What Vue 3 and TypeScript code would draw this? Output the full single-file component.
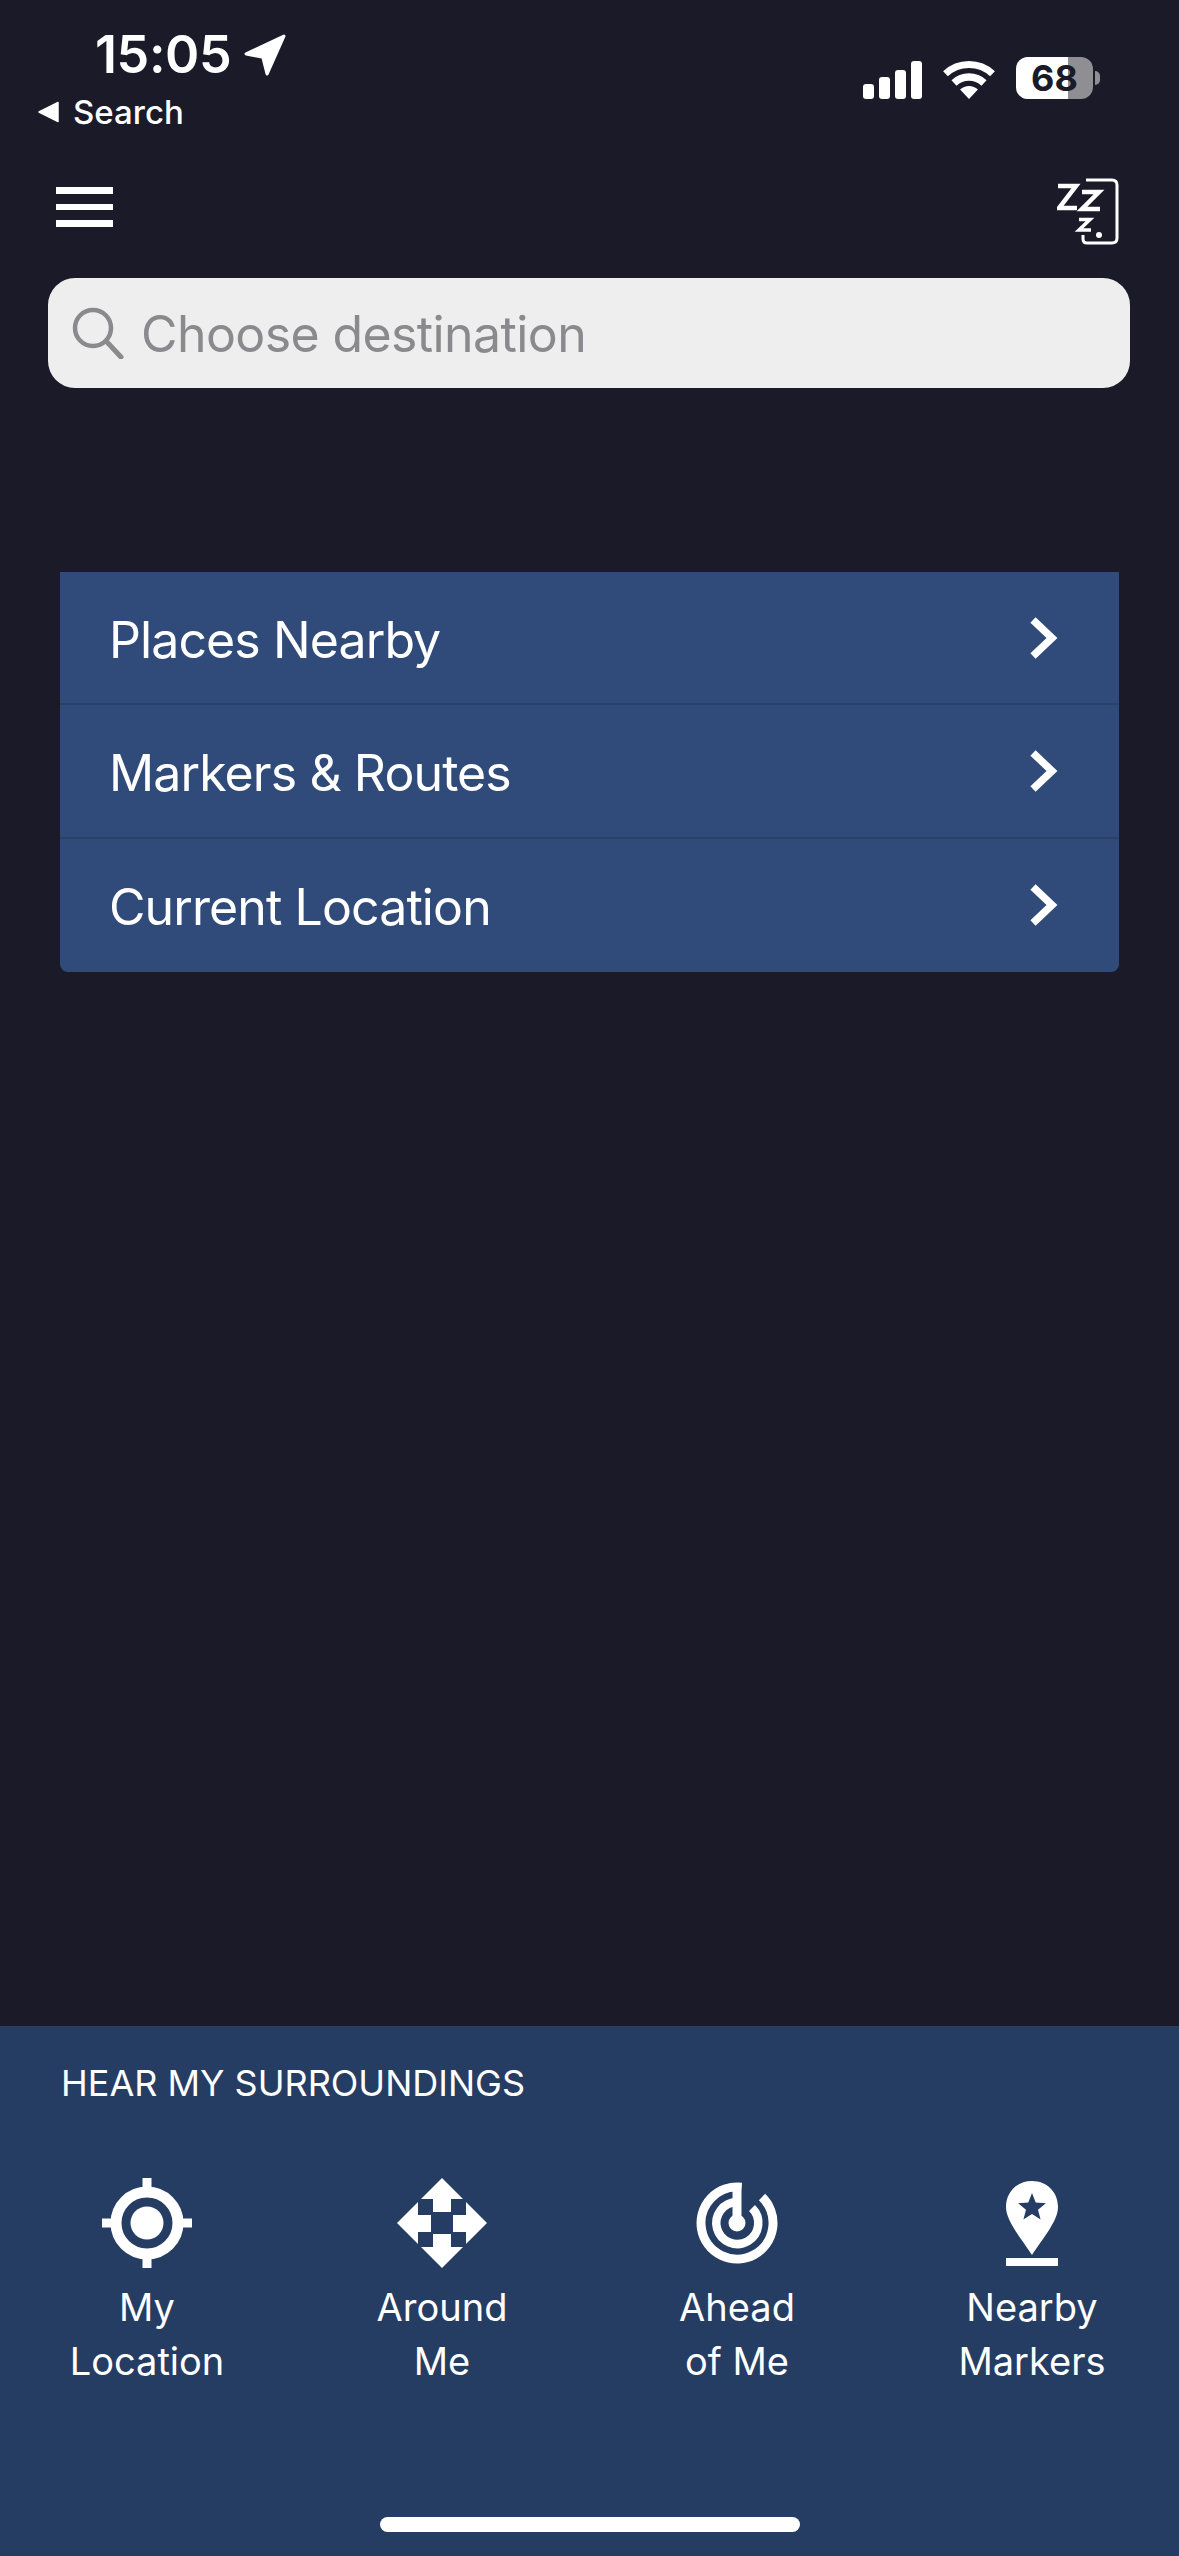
<template>
  <div class="screen">
    <div class="status-bar">
      <div class="status-left">
        <div class="time-row">
          <span class="time">15:05</span>
          <svg class="location-arrow" width="42" height="42" viewBox="0 0 40 40">
            <path d="M38 2 L2 19 L18 22 L22 38 Z" fill="#fff" stroke="#fff" stroke-width="3" stroke-linejoin="round" />
          </svg>
        </div>
        <div class="back-row">
          <svg width="22" height="22" viewBox="0 0 22 22">
            <path d="M1 11 L20 1.5 V20.5 Z" fill="#fff" stroke="#fff" stroke-width="1.5" stroke-linejoin="round" />
          </svg>
          <span class="back-label">Search</span>
        </div>
      </div>
      <div class="status-right">
        <div class="signal">
          <span v-for="h in signalBars" :key="h" class="signal-bar" :style="{ height: h + 'px' }"></span>
        </div>
        <svg width="52" height="38" viewBox="0 0 52 38">
          <path d="M2.5 12.8 A34.5 34.5 0 0 1 49.5 12.8" fill="none" stroke="#fff" stroke-width="7" />
          <path d="M11 22 A22 22 0 0 1 41 22" fill="none" stroke="#fff" stroke-width="7.5" />
          <path d="M26 38 L17.1 28.5 A13 13 0 0 1 34.9 28.5 Z" fill="#fff" />
        </svg>
        <div class="battery">
          <div class="battery-body">
            <div class="battery-fill"></div>
            <span class="battery-text">68</span>
          </div>
          <span class="battery-nub"></span>
        </div>
      </div>
    </div>

    <div class="nav">
      <div class="hamburger">
        <span></span>
        <span></span>
        <span></span>
      </div>
      <svg width="62" height="68" viewBox="0 0 62 68" fill="none" stroke="#fff">
        <path d="M29 3 H55 Q60 3 60 8 V61 Q60 66 55 66 H30 Q26 66 26 62 V58" stroke-width="3" />
        <path d="M1 9 H19 L2 31 H20" stroke-width="4.5" />
        <path d="M25 15 H42 L25 32 H43" stroke-width="4.5" />
        <path d="M22 42.5 H33 L22 53 H34" stroke-width="3.5" />
        <circle cx="42" cy="58" r="3" fill="#fff" stroke="none" />
      </svg>
    </div>

    <div class="search-box">
      <svg width="52" height="52" viewBox="0 0 52 52" fill="none" stroke="#8a8a8e" stroke-width="4.5">
        <circle cx="21" cy="21" r="18" />
        <path d="M34 34 L49 50" stroke-linecap="round" stroke-width="5" />
      </svg>
      <span class="search-placeholder">Choose destination</span>
    </div>

    <div class="menu-list">
      <div v-for="item in menuItems" :key="item" class="menu-row">
        <span class="menu-label">{{ item }}</span>
        <svg width="30" height="44" viewBox="0 0 30 44" fill="none" stroke="#fff" stroke-width="7.5">
          <path d="M4 4 L23 22 L4 40" />
        </svg>
      </div>
    </div>

    <div class="bottom-panel">
      <div class="panel-title">HEAR MY SURROUNDINGS</div>
      <div class="actions">
        <div class="action">
          <svg class="action-icon" width="90" height="90" viewBox="0 0 90 90">
            <circle cx="45" cy="45" r="31" fill="none" stroke="#fff" stroke-width="11" />
            <circle cx="45" cy="45" r="16.5" fill="#fff" />
            <path d="M40.5 0 H49.5 V12 H40.5 Z M40.5 78 H49.5 V90 H40.5 Z M0 40.5 H12 V49.5 H0 Z M78 40.5 H90 V49.5 H78 Z" fill="#fff" />
          </svg>
          <span class="action-label">My<br />Location</span>
        </div>
        <div class="action">
          <svg class="action-icon" width="90" height="90" viewBox="0 0 90 90">
            <path
              d="M45 0 L66 21 H54 V34 H36 V21 H24 Z M45 90 L66 69 H54 V56 H36 V69 H24 Z M0 45 L21 24 V37 H34 V54 H21 V66 Z M90 45 L69 24 V37 H56 V54 H69 V66 Z"
              fill="#fff"
            />
          </svg>
          <span class="action-label">Around<br />Me</span>
        </div>
        <div class="action">
          <svg class="action-icon" width="90" height="90" viewBox="0 0 90 90" fill="none" stroke="#fff">
            <path d="M49.5 9.3 A36 36 0 1 0 70 19.1" stroke-width="9" />
            <path d="M45 24 A21 21 0 1 0 60 30" stroke-width="8.5" />
            <path d="M45 5 V44" stroke-width="9" />
            <circle cx="45" cy="45" r="8.5" fill="#fff" stroke="none" />
          </svg>
          <span class="action-label">Ahead<br />of Me</span>
        </div>
        <div class="action">
          <svg class="action-icon" width="90" height="90" viewBox="0 0 90 90">
            <path d="M45 3 C60 3 71 14 71 29 C71 43 56 60 45 77 C34 60 19 43 19 29 C19 14 30 3 45 3 Z" fill="#fff" />
            <path d="M45 15 L48.7 24.6 L58.9 25.2 L51 31.7 L53.6 41.6 L45 36 L36.4 41.6 L39 31.7 L31.1 25.2 L41.3 24.6 Z" fill="#253c63" />
            <rect x="19" y="80" width="52" height="8" fill="#fff" />
          </svg>
          <span class="action-label">Nearby<br />Markers</span>
        </div>
      </div>
      <div class="home-indicator"></div>
    </div>
  </div>
</template>

<script setup lang="ts">
const signalBars = [15, 22, 29, 38]

const menuItems = ['Places Nearby', 'Markers & Routes', 'Current Location']
</script>

<style>
html,
body {
  margin: 0;
  background: #1a1a28;
}
</style>

<style scoped>
.screen {
  width: 1179px;
  height: 2556px;
  display: flex;
  flex-direction: column;
  background: #1a1a28;
  color: #fff;
  font-family: Inter, 'Liberation Sans', sans-serif;
  overflow: hidden;
}

.status-bar {
  height: 177px;
  box-sizing: border-box;
  display: flex;
  justify-content: space-between;
  align-items: flex-start;
  padding: 0 79px 0 38px;
}

.status-left {
  display: flex;
  flex-direction: column;
  padding-top: 25px;
}

.time-row {
  display: flex;
  align-items: center;
  gap: 13px;
  padding-left: 57px;
  height: 60px;
}

.time {
  font-size: 52px;
  font-weight: 600;
  line-height: 60px;
  letter-spacing: -0.4px;
}

.back-row {
  display: flex;
  align-items: center;
  gap: 13px;
  height: 40px;
  margin-top: 7px;
}

.back-label {
  font-size: 33px;
  font-weight: 500;
  line-height: 40px;
}

.status-right {
  display: flex;
  align-items: flex-end;
  gap: 21px;
  padding-top: 57px;
}

.signal {
  display: flex;
  align-items: flex-end;
  gap: 5px;
  height: 40px;
}

.signal-bar {
  width: 11px;
  border-radius: 3px;
  background: #fff;
}

.battery {
  display: flex;
  align-items: center;
  gap: 2px;
}

.battery-body {
  position: relative;
  width: 77px;
  height: 42px;
  border-radius: 12px;
  background: #8e8e93;
}

.battery-fill {
  width: 52px;
  height: 100%;
  border-radius: 12px 0 0 12px;
  background: #fff;
}

.battery-text {
  position: absolute;
  left: 0;
  right: 0;
  top: 0;
  text-align: center;
  font-size: 36px;
  font-weight: 700;
  line-height: 42px;
  color: #1a1a28;
}

.battery-nub {
  width: 5px;
  height: 14px;
  border-radius: 0 7px 7px 0;
  background: #8e8e93;
}

.nav {
  display: flex;
  justify-content: space-between;
  align-items: flex-start;
  height: 68px;
  padding: 0 60px 0 56px;
}

.hamburger {
  display: flex;
  flex-direction: column;
  gap: 10px;
  width: 57px;
  padding-top: 10px;
}

.hamburger span {
  height: 6.5px;
  background: #fff;
}

.search-box {
  display: flex;
  align-items: center;
  gap: 17px;
  height: 110px;
  margin: 33px 49px 0 48px;
  padding-left: 24px;
  box-sizing: border-box;
  border-radius: 27px;
  background: #eeeeee;
}

.search-placeholder {
  font-size: 50px;
  line-height: 60px;
  font-weight: 400;
  letter-spacing: -0.6px;
  color: #8a8a8e;
  padding-top: 2px;
}

.menu-list {
  margin: 184px 60px 0;
  border-radius: 0 0 8px 8px;
  overflow: hidden;
  background: #304b7a;
}

.menu-row {
  display: flex;
  align-items: center;
  justify-content: space-between;
  height: 133.33px;
  padding: 0 60px 0 49px;
  box-sizing: border-box;
  border-bottom: 2px solid #2b4268;
}

.menu-row:last-child {
  border-bottom: none;
}

.menu-label {
  font-size: 50px;
  font-weight: 400;
  line-height: 60px;
  letter-spacing: -0.9px;
  padding-top: 4px;
}

.bottom-panel {
  position: relative;
  margin-top: auto;
  height: 530px;
  box-sizing: border-box;
  padding-top: 35px;
  background: #253c63;
}

.panel-title {
  padding-left: 61px;
  font-size: 36px;
  line-height: 44px;
  font-weight: 400;
}

.actions {
  display: flex;
  gap: 115px;
  padding-left: 57px;
  margin-top: 73px;
}

.action {
  width: 180px;
  display: flex;
  flex-direction: column;
  align-items: center;
}

.action-label {
  margin-top: 12px;
  font-size: 38px;
  line-height: 54px;
  text-align: center;
}

.home-indicator {
  position: absolute;
  left: 380px;
  bottom: 24px;
  width: 420px;
  height: 15px;
  border-radius: 8px;
  background: #fff;
}
</style>
